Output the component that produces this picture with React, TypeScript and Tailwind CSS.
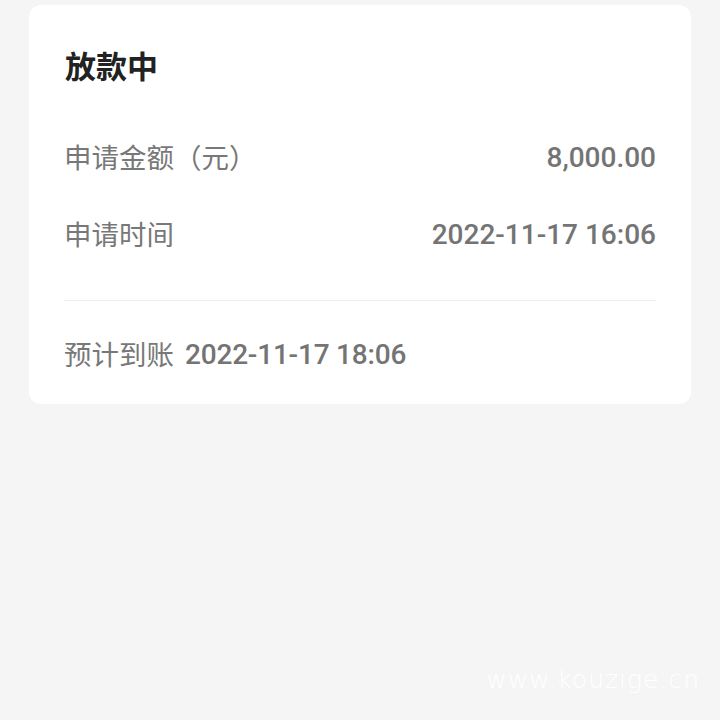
import React from "react";

export default function App() {
  const cjk = { fontFamily: '"Noto Sans CJK SC", "Noto Sans", sans-serif' };
  const num = { fontFamily: 'Roboto, "Noto Sans CJK SC", sans-serif' };
  return (
    <div className="relative w-[720px] h-[720px] bg-[#f5f5f5] pt-[5px] px-[29px]" style={cjk}>
      <div className="bg-white rounded-[12px] px-[35px] pt-[40px] pb-[31px]">
        <div className="h-[40px] leading-[40px] text-[31px] font-bold text-[#222222] pl-[1px]">放款中</div>
        <div className="mt-[55px] h-[36px] flex items-center justify-between">
          <span className="text-[27.5px] text-[#787878] -mt-[2px]">申请金额（元）</span>
          <span className="text-[28px] font-medium text-[#747474]" style={num}>8,000.00</span>
        </div>
        <div className="mt-[41px] h-[36px] flex items-center justify-between">
          <span className="text-[27.5px] text-[#787878] -mt-[2px]">申请时间</span>
          <span className="text-[28px] font-medium text-[#747474]" style={num}>2022-11-17 16:06</span>
        </div>
        <div className="mt-[47px] h-px bg-[#ececec]" />
        <div className="mt-[36px] h-[36px] flex items-center gap-[11px]">
          <span className="text-[27.5px] text-[#787878] -mt-[2px]">预计到账</span>
          <span className="text-[28px] font-medium text-[#747474] tracking-[-0.2px]" style={num}>2022-11-17 18:06</span>
        </div>
      </div>
      <div
        className="absolute right-[20px] bottom-[22px] text-[25px] text-white tracking-[1px]"
        style={{ fontFamily: '"DejaVu Sans", sans-serif', fontWeight: 300 }}
      >
        www.kouzige.cn
      </div>
    </div>
  );
}
